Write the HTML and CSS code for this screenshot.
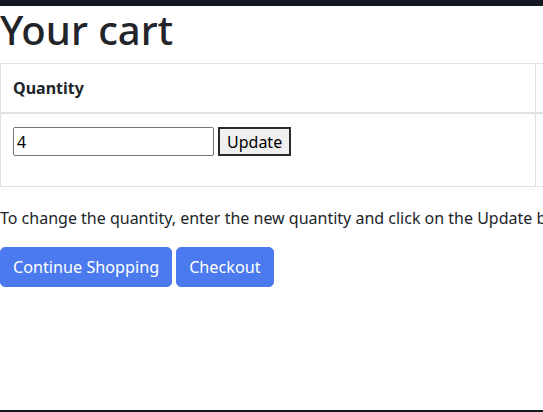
FILE: index.html
```html
<!DOCTYPE html>
<html lang="en">
<head>
<meta charset="utf-8">
<title>Your cart</title>
<link rel="stylesheet" href="styles.css">
</head>
<body>
<div class="page">
  <div class="topbar"></div>
  <main class="content">
    <h1 class="title">Your cart</h1>
    <table class="cart-table">
      <thead>
        <tr>
          <th class="col-qty">Quantity</th>
          <th class="col-next"></th>
        </tr>
      </thead>
      <tbody>
        <tr>
          <td class="col-qty">
            <form class="qty-form">
              <input class="qty-input" type="text" value="4"><button class="update-btn" type="button">Update</button>
            </form>
          </td>
          <td class="col-next"></td>
        </tr>
      </tbody>
    </table>
    <p class="hint">To change the quantity, enter the new quantity and click on the Update button.</p>
    <div class="actions">
      <a class="btn" href="#">Continue Shopping</a>
      <a class="btn" href="#">Checkout</a>
    </div>
  </main>
  <div class="bottombar"></div>
</div>
</body>
</html>
```
FILE: styles.css
```css
html {
  overflow: hidden;
}
body {
  margin: 0;
  font-family: "Noto Sans", "Open Sans", sans-serif;
  font-size: 16px;
  line-height: 1.5;
  color: #212529;
  background: #fff;
}
.page {
  display: flex;
  flex-direction: column;
  height: 412px;
}
.topbar {
  height: 6px;
  background: #151823;
  flex: none;
}
.content {
  flex: 1;
  min-width: 0;
}
.bottombar {
  height: 2px;
  background: #151823;
  flex: none;
}
.title {
  margin: 0 0 9px;
  font-size: 40px;
  font-weight: 500;
  line-height: 1.2;
  white-space: nowrap;
}
.cart-table {
  border-collapse: collapse;
  width: 700px;
  margin-bottom: 19px;
}
.cart-table th,
.cart-table td {
  border: 1px solid #dee2e6;
  padding: 12px;
  text-align: left;
  vertical-align: top;
}
.cart-table th {
  font-weight: 700;
  border-bottom-width: 2px;
}
.col-qty {
  width: 510px;
}
.qty-form {
  display: flex;
  gap: 4px;
  padding-top: 1px;
  padding-bottom: 18px;
}
.qty-input {
  width: 201px;
  height: 29px;
  box-sizing: border-box;
  border: 1px solid #767676;
  border-radius: 2px;
  padding: 1px 3px;
  font: inherit;
  font-size: 16px;
  color: #000;
}
.update-btn {
  height: 29px;
  box-sizing: border-box;
  border: 2px solid #2b2b2b;
  background: #efefef;
  padding: 0 7px;
  font: inherit;
  font-size: 16px;
  color: #000;
}
.hint {
  margin: 0 0 17px;
  white-space: nowrap;
}
.actions {
  display: flex;
  gap: 4px;
}
.btn {
  display: inline-block;
  padding: 6px 12px;
  border: 1px solid #4a7aee;
  background: #4a7aee;
  color: #fff;
  border-radius: 5px;
  font-size: 16.2px;
  line-height: 26px;
  text-decoration: none;
}
```
